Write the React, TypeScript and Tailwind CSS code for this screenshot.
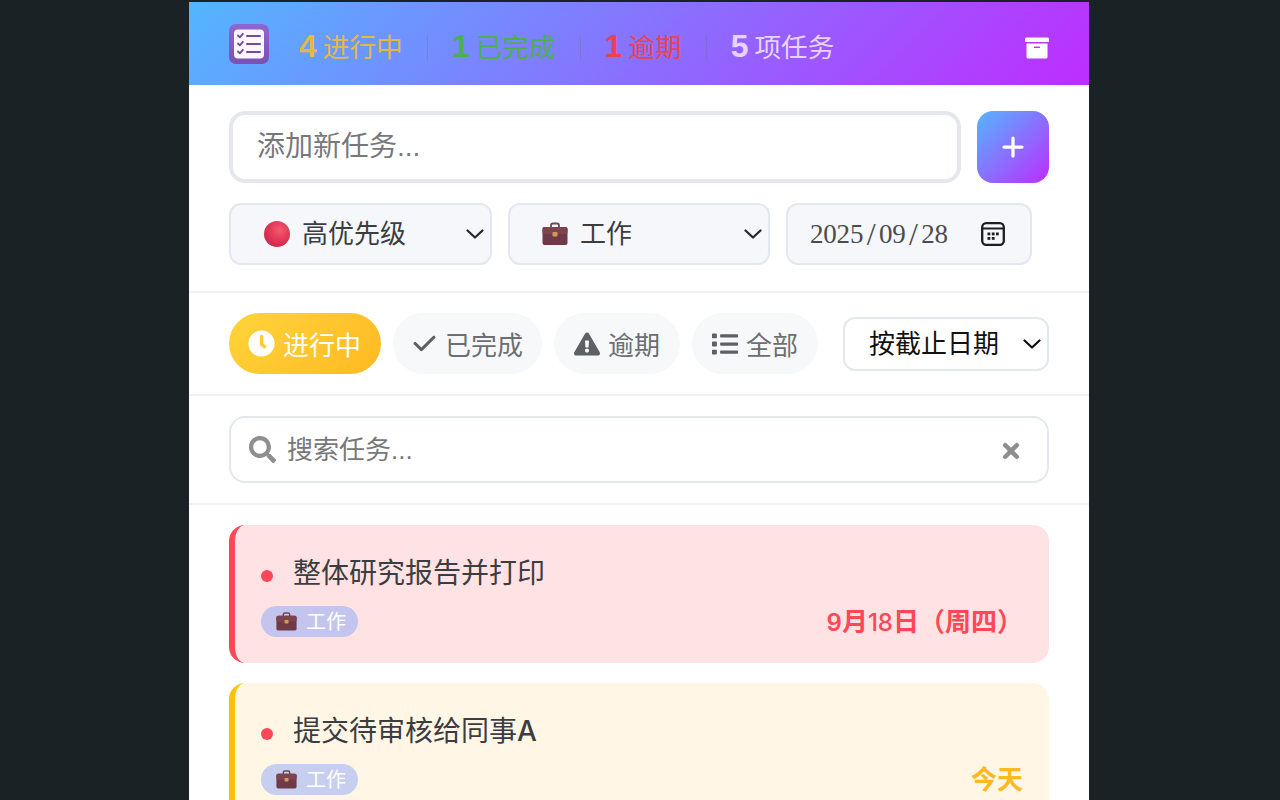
import React from "react";
import { FaArchive, FaClock, FaExclamationTriangle, FaList, FaSearch, FaTimes } from "react-icons/fa";
import { FaCheck, FaPlus } from "react-icons/fa6";

const font = "font-['Liberation_Sans','Noto_Sans_CJK_SC',sans-serif]";

function Chevron({ className = "" }: { className?: string }) {
  return (
    <svg width="18" height="10" viewBox="0 0 18 10" fill="none" className={className}>
      <path d="M1.5 1.5 9 8.5l7.500-7" stroke="currentColor" strokeWidth="2.200" strokeLinecap="round" strokeLinejoin="round" />
    </svg>
  );
}

function Briefcase({ size = 26 }: { size?: number }) {
  return (
    <svg width={size} height={size} viewBox="0 0 26 26" className="shrink-0">
      <path d="M9 7V4.500C9 3.300 9.800 2.500 11 2.500h4c1.200 0 2 .8 2 2V7" fill="none" stroke="#6b4a50" strokeWidth="1.800" />
      <rect x="0.500" y="6" width="25" height="18" rx="2" fill="#6f3a48" />
      <rect x="0.500" y="6" width="25" height="7" rx="2" fill="#7d4450" />
      <rect x="10.500" y="11" width="5" height="4.500" rx="1" fill="#d39a55" />
    </svg>
  );
}

function Ball() {
  return (
    <svg width="26" height="26" viewBox="0 0 26 26" className="shrink-0">
      <defs>
        <radialGradient id="ball" cx="60%" cy="35%" r="70%">
          <stop offset="0%" stopColor="#f4596f" />
          <stop offset="70%" stopColor="#dd3153" />
          <stop offset="100%" stopColor="#c92a50" />
        </radialGradient>
      </defs>
      <circle cx="13" cy="13" r="13" fill="url(#ball)" />
    </svg>
  );
}

function ListLogo() {
  return (
    <svg width="40" height="40" viewBox="0 0 40 40" className="shrink-0">
      <defs>
        <linearGradient id="logoBg" x1="0" y1="0" x2="0" y2="1">
          <stop offset="0%" stopColor="#8f66d2" />
          <stop offset="100%" stopColor="#7a50b4" />
        </linearGradient>
      </defs>
      <rect width="40" height="40" rx="7" fill="url(#logoBg)" />
      <rect x="5" y="5.500" width="30" height="29" rx="4" fill="#faf6ff" />
      <g fill="none" stroke="#6f4aa6" strokeWidth="1.800" strokeLinecap="round" strokeLinejoin="round">
        <path d="M9 11.500l1.800 1.800 3-3.500M9 19.500l1.800 1.800 3-3.500M9 27.500l1.800 1.800 3-3.500" />
      </g>
      <g stroke="#6f4aa6" strokeWidth="2" strokeLinecap="round">
        <path d="M18 12h13M18 20h13M18 28h13" />
      </g>
    </svg>
  );
}

function CalendarIcon() {
  return (
    <svg width="24" height="24" viewBox="0 0 24 24" fill="none" className="shrink-0">
      <rect x="1.200" y="1.200" width="21.600" height="21.600" rx="4" stroke="#1b1e22" strokeWidth="2.300" />
      <path d="M1.500 6.500h21" stroke="#1b1e22" strokeWidth="2" />
      <g fill="#1b1e22">
        <rect x="6.500" y="10.500" width="2.800" height="2.800" />
        <rect x="10.800" y="10.500" width="2.800" height="2.800" />
        <rect x="15" y="10.500" width="2.800" height="2.800" />
        <rect x="6.500" y="15" width="2.800" height="2.800" />
        <rect x="10.800" y="15" width="2.800" height="2.800" />
      </g>
    </svg>
  );
}

function Stat({ n, label, color, sep = true }: { n: string; label: string; color: string; sep?: boolean }) {
  return (
    <>
      <div className={`flex items-center gap-[6px] ${color}`}>
        <span className="mb-[5px] text-[32px] font-bold leading-none">{n}</span>
        <span className="text-[26.670px] leading-none">{label}</span>
      </div>
      {sep && <div className="mx-[24px] h-[26px] w-px bg-gray-500/30" />}
    </>
  );
}

function Pill({ icon, label, active = false, w, pad = "pl-[19px]" }: { icon: React.ReactNode; label: string; active?: boolean; w: string; pad?: string }) {
  return (
    <div
      className={`flex h-[61px] items-center gap-[8px] rounded-full text-[26px] ${pad} ${w} ${
        active ? "bg-[linear-gradient(135deg,#ffd43b,#ffb922)] text-white" : "bg-[#f6f8fa] text-[#6b6e72]"
      }`}
    >
      {icon}
      <span className="mt-[6px]">{label}</span>
    </div>
  );
}

function Task({ title, date, dateColor, bar, bg, tag }: { title: React.ReactNode; date: React.ReactNode; dateColor: string; bar: string; bg: string; tag: string }) {
  return (
    <div className={`h-[138px] shrink-0 rounded-2xl border-l-[6px] px-[26px] ${bar} ${bg}`}>
      <div className="flex h-[77px] items-center pt-[19px]">
        <span className="mr-[20px] mt-[5px] size-[12px] rounded-full bg-[#ff4757]" />
        <span className="font-['Inter','Noto_Sans_CJK_SC',sans-serif] text-[28px] leading-none text-[#3b3d40]">{title}</span>
      </div>
      <div className="mt-[4px] flex h-[31px] items-center justify-between">
        <div className={`flex h-[31px] w-[97px] items-center gap-[9px] rounded-full pl-[15px] text-[20px] text-white ${tag}`}>
          <Briefcase size={21} />
          <span>工作</span>
        </div>
        <span className={`mt-[2px] text-[26px] font-bold ${dateColor}`}>{date}</span>
      </div>
    </div>
  );
}

export default function App() {
  return (
    <div className={`h-[800px] overflow-hidden bg-[#1b2225] pl-[189px] pt-[2px] ${font}`}>
      <div className="flex h-[798px] w-[900px] flex-col overflow-hidden bg-white">
        <header className="flex h-[83px] shrink-0 items-center bg-[linear-gradient(135deg,#53b6ff,#bd2dff)] px-[40px]">
          <ListLogo />
          <div className="ml-[30px] mt-[9px] flex items-center">
            <Stat n="4" label="进行中" color="text-[#e3b845]" />
            <Stat n="1" label="已完成" color="text-[#4caf50]" />
            <Stat n="1" label="逾期" color="text-[#ea4350]" />
            <Stat n="5" label="项任务" color="text-[#e6d4ff]" sep={false} />
          </div>
          <FaArchive className="ml-auto mt-[8px] text-[24px] text-white" />
        </header>

        <section className="flex h-[208px] shrink-0 flex-col gap-[20px] border-b-2 border-[#f0f1f4] px-[40px] pt-[26px]">
          <div className="flex gap-[16px]">
            <input
              placeholder="添加新任务..."
              className="h-[72px] min-w-0 flex-1 rounded-2xl border-[4px] border-[#e4e7ec] bg-white pl-[24px] text-[28px] text-[#333] outline-none placeholder:text-[#77787a]"
            />
            <button className="flex size-[72px] items-center justify-center rounded-2xl bg-[linear-gradient(135deg,#53b6ff,#bd2dff)] text-[26px] text-white">
              <FaPlus />
            </button>
          </div>
          <div className="flex gap-[16px] text-[26px] text-[#3b3d40]">
            <div className="flex h-[62px] w-[263px] items-center rounded-xl border-2 border-[#e3e8ee] bg-[#f5f7fa] pl-[33px] pr-[6px]">
              <Ball />
              <span className="ml-[12px]">高优先级</span>
              <Chevron className="ml-auto text-[#26282b]" />
            </div>
            <div className="flex h-[62px] w-[262px] items-center rounded-xl border-2 border-[#e3e8ee] bg-[#f5f7fa] pl-[32px] pr-[6px]">
              <Briefcase />
              <span className="ml-[12px]">工作</span>
              <Chevron className="ml-auto text-[#26282b]" />
            </div>
            <div className="flex h-[62px] w-[246px] items-center rounded-xl border-2 border-[#e3e8ee] bg-[#f5f7fa] pl-[22px] font-['Liberation_Serif',serif] text-[27px] tracking-[-0.200px] text-[#4a4c50]">
              <span>2025</span>
              <span className="mx-[3.500px] text-[32px] font-light leading-none">/</span>
              <span>09</span>
              <span className="mx-[3.500px] text-[32px] font-light leading-none">/</span>
              <span>28</span>
              <span className="ml-auto mr-[25px]">
                <CalendarIcon />
              </span>
            </div>
          </div>
        </section>

        <section className="flex h-[103px] shrink-0 items-center border-b-2 border-[#f0f1f4] px-[40px]">
          <div className="flex gap-[12px]">
            <Pill active w="w-[152px]" icon={<FaClock className="text-[27px]" />} label="进行中" />
            <Pill w="w-[149px]" icon={<FaCheck className="text-[25px] text-[#5d6064]" />} label="已完成" />
            <Pill w="w-[126px]" pad="pl-[20px]" icon={<FaExclamationTriangle className="text-[26px] text-[#5d6064]" />} label="逾期" />
            <Pill w="w-[126px]" pad="pl-[20px]" icon={<FaList className="text-[26px] text-[#5d6064]" />} label="全部" />
          </div>
          <div className="ml-auto flex h-[54px] w-[206px] items-center rounded-xl border-2 border-[#e3e8ee] bg-white pl-[24px] pr-[6px] text-[26px] text-[#111]">
            <span className="mt-[2px]">按截止日期</span>
            <Chevron className="ml-auto text-[#111]" />
          </div>
        </section>

        <section className="flex h-[109px] shrink-0 items-center border-b-2 border-[#f0f1f4] px-[40px]">
          <div className="flex h-[67px] w-full items-center rounded-2xl border-2 border-[#e4e7ec] bg-white pl-[18px] pr-[24px]">
            <FaSearch className="text-[27px] text-[#8e8e8e]" />
            <input
              placeholder="搜索任务..."
              className="ml-[11px] mt-[2px] min-w-0 flex-1 bg-transparent text-[26px] outline-none placeholder:text-[#77787a]"
            />
            <FaTimes className="mt-[2px] text-[24px] text-[#8e8e8e]" />
          </div>
        </section>

        <section className="flex flex-col gap-[20px] px-[40px] pt-[20px]">
          <Task
            title="整体研究报告并打印"
            date={
              <>
                <span className="font-['Inter'] text-[24px] font-semibold">9</span>月<span className="font-['Inter'] text-[24px] font-medium">18</span>日（周四）
              </>
            }
            dateColor="text-[#ff4757]"
            bar="border-[#ff4757]"
            bg="bg-[#ffe3e4]"
            tag="bg-[#c3c5ee]"
          />
          <Task
            title={
              <>
                提交待审核给同事<span className="font-medium">A</span>
              </>
            }
            date="今天"
            dateColor="text-[#ffb81f]"
            bar="border-[#ffc107]"
            bg="bg-[#fff6e5]"
            tag="bg-[#c7cff0]"
          />
        </section>
      </div>
    </div>
  );
}
